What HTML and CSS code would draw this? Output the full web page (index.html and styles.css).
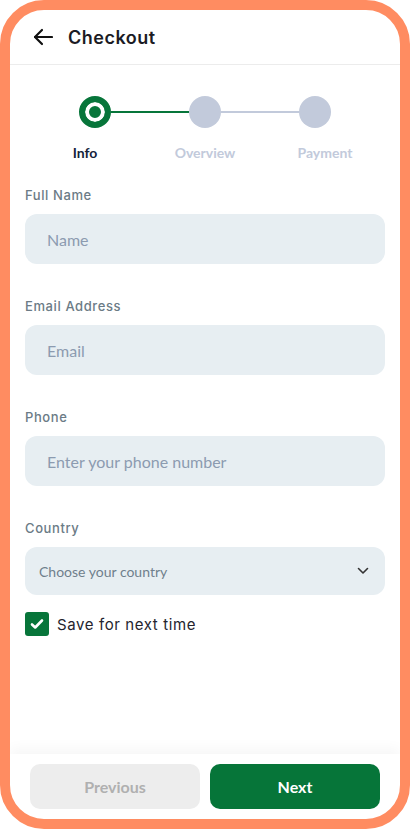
FILE: index.html
```html
<!DOCTYPE html>
<html lang="en">
<head>
  <meta charset="UTF-8">
  <title>Checkout</title>
  <link rel="stylesheet" href="styles.css">
</head>
<body>
  <div class="phone">
    <div class="header">
      <svg class="back" width="20" height="18" viewBox="0 0 20 18" fill="none" stroke="#111" stroke-width="2.2" stroke-linecap="round" stroke-linejoin="round">
        <path d="M2 9h17"/>
        <path d="M9 2L2 9l7 7"/>
      </svg>
      <h2>Checkout</h2>
    </div>

    <div class="content">
      <div class="stepper">
        <div class="dots">
          <span class="dot active"></span>
          <span class="line done"></span>
          <span class="dot"></span>
          <span class="line"></span>
          <span class="dot"></span>
        </div>
        <div class="step-labels">
          <span class="current">Info</span>
          <span>Overview</span>
          <span>Payment</span>
        </div>
      </div>

      <label class="field-label">Full Name</label>
      <input class="field" type="text" placeholder="Name">

      <label class="field-label">Email Address</label>
      <input class="field" type="email" placeholder="Email">

      <label class="field-label">Phone</label>
      <input class="field" type="text" placeholder="Enter your phone number">

      <label class="field-label">Country</label>
      <div class="select">
        <span>Choose your country</span>
        <svg width="12" height="8" viewBox="0 0 12 8" fill="none" stroke="#333" stroke-width="1.6" stroke-linecap="round" stroke-linejoin="round"><path d="M1.5 1.5L6 6l4.5-4.5"/></svg>
      </div>

      <div class="save">
        <span class="checkbox">
          <svg width="14" height="12" viewBox="0 0 14 12" fill="none" stroke="#fff" stroke-width="2.6" stroke-linecap="round" stroke-linejoin="round"><path d="M2 6.5l3.2 3L12 2.5"/></svg>
        </span>
        <span>Save for next time</span>
      </div>
    </div>

    <div class="footer">
      <button class="btn prev">Previous</button>
      <button class="btn next">Next</button>
    </div>
  </div>
</body>
</html>
```

FILE: styles.css
```css
body {
  margin: 0;
  background: #fff;
  font-family: Inter, "Open Sans", sans-serif;
}
.phone {
  box-sizing: border-box;
  width: 410px;
  height: 829px;
  border: 10px solid #ff8c61;
  border-radius: 44px;
  background: #fff;
  display: flex;
  flex-direction: column;
  overflow: hidden;
}
.header {
  height: 54px;
  border-bottom: 1px solid #ececec;
  display: flex;
  align-items: center;
  padding-left: 23px;
  gap: 15px;
}
.header h2 {
  margin: 0;
  font-size: 18px;
  font-weight: 600;
  letter-spacing: 0.5px;
  color: #1b1b24;
}
.content {
  flex: 1;
  padding: 0 15px;
}
.stepper {
  margin-top: 31px;
  margin-bottom: 23px;
}
.dots {
  display: flex;
  align-items: center;
  padding: 0 54px;
}
.dot {
  width: 32px;
  height: 32px;
  border-radius: 50%;
  background: #c2cadb;
  box-sizing: border-box;
  flex: none;
}
.dot.active {
  background: #07753a;
  border: 6px solid #07753a;
  box-shadow: inset 0 0 0 4px #fff;
}
.line {
  flex: 1;
  height: 2px;
  background: #c2cadb;
}
.line.done {
  background: #07753a;
}
.step-labels {
  display: grid;
  grid-template-columns: repeat(3, 1fr);
  text-align: center;
  margin-top: 16px;
  font-family: Lato, sans-serif;
  font-weight: 700;
  font-size: 14px;
  line-height: 18px;
  color: #c2cadb;
}
.step-labels .current {
  color: #14233a;
}
.field-label {
  display: block;
  font-size: 13px;
  font-weight: 500;
  letter-spacing: 0.6px;
  line-height: 20px;
  color: #6b7b86;
  margin-bottom: 9px;
}
.field {
  display: block;
  box-sizing: border-box;
  width: 100%;
  height: 50px;
  border: none;
  border-radius: 12px;
  background: #e7eef2;
  padding: 0 22px;
  margin-bottom: 32px;
  font-family: Lato, sans-serif;
  font-size: 16px;
  color: #333;
  outline: none;
}
.field::placeholder {
  color: #8c9bb0;
}
.select {
  height: 48px;
  border-radius: 12px;
  background: #e7eef2;
  display: flex;
  align-items: center;
  justify-content: space-between;
  padding: 0 16px 0 14px;
  font-family: Lato, sans-serif;
  font-size: 14px;
  color: #6f7f8c;
}
.save {
  display: flex;
  align-items: center;
  gap: 8px;
  margin-top: 17px;
  font-size: 15px;
  letter-spacing: 0.6px;
  color: #24242e;
}
.checkbox {
  width: 24px;
  height: 24px;
  border-radius: 3px;
  background: #07753a;
  display: flex;
  align-items: center;
  justify-content: center;
}
.footer {
  display: flex;
  gap: 10px;
  padding: 10px 20px;
  box-shadow: 0 -6px 12px rgba(0,0,0,0.035);
}
.btn {
  flex: 1;
  height: 45px;
  border: none;
  border-radius: 10px;
  font-family: Lato, sans-serif;
  font-weight: 700;
  font-size: 16px;
  cursor: pointer;
}
.prev {
  background: #ededed;
  color: #b0b0b0;
}
.next {
  background: #067539;
  color: #fff;
}
```
